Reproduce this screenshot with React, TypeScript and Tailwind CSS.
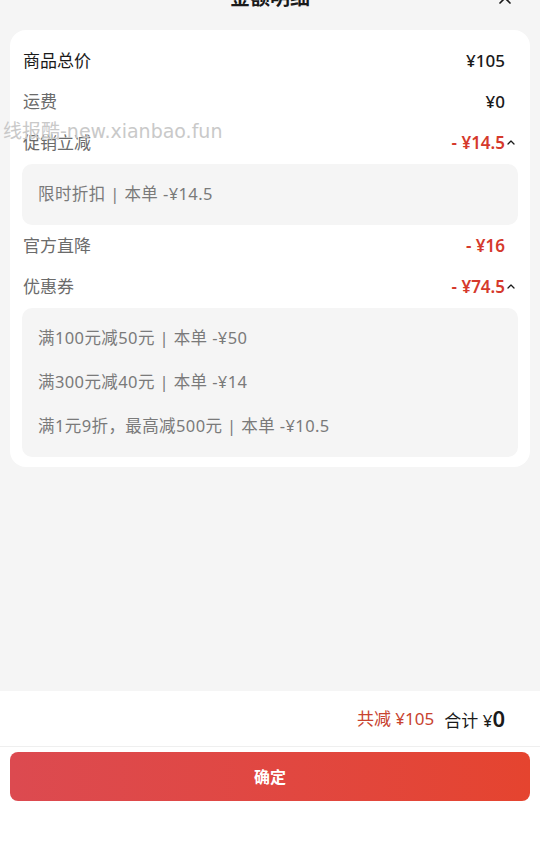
import { X, ChevronUp } from 'lucide-react'

const font = { fontFamily: '"Noto Sans", "Noto Sans CJK SC", sans-serif' }

interface RowProps {
  label: string
  value: string
  strong?: boolean
  red?: boolean
  open?: boolean
}

function Row({ label, value, strong, red, open }: RowProps) {
  return (
    <div className="flex h-[41px] items-center justify-between pl-[13px] pr-[13px]">
      <span className={strong ? 'text-[17px] text-[#1a1a1a]' : 'text-[17px] text-[#6b6b6b]'}>{label}</span>
      <div className="flex items-center">
        <span
          className={
            red
              ? 'text-[17px] font-semibold text-[#d5392c]'
              : 'text-[17px] font-medium text-[#1a1a1a]'
          }
        >
          {value}
        </span>
        <span className="flex w-[12px] justify-end">
          {open && <ChevronUp size={13} strokeWidth={2.5} className="text-[#1a1a1a]" />}
        </span>
      </div>
    </div>
  )
}

function DetailBox({ lines }: { lines: string[] }) {
  return (
    <div className="mx-[12px] rounded-[10px] bg-[#f5f5f5] px-[16px] py-[8.5px]">
      {lines.map((line) => (
        <div key={line} className="flex h-[44px] items-center text-[16.5px] tracking-[0.4px] text-[#7a7a7a]">
          {line}
        </div>
      ))}
    </div>
  )
}

export default function App() {
  return (
    <div className="relative flex h-[844px] w-full flex-col overflow-hidden bg-[#f5f5f5]" style={font}>
      <div className="relative -mt-[22px] mb-[12px] flex h-[40px] shrink-0 items-center justify-center">
        <span className="text-[20px] font-bold text-[#1a1a1a]">金额明细</span>
        <X size={20} strokeWidth={2} className="absolute right-[25px] text-[#1a1a1a]" />
      </div>

      <div className="mx-[10px] rounded-[16px] bg-white pb-[10px] pt-[10px]">
        <Row label="商品总价" value="¥105" strong />
        <Row label="运费" value="¥0" />
        <Row label="促销立减" value="- ¥14.5" red open />
        <div className="mt-[1px]">
          <div className="mx-[12px] flex h-[61px] items-center rounded-[10px] bg-[#f5f5f5] px-[16px] text-[16.5px] tracking-[0.4px] text-[#7a7a7a]">
            限时折扣 | 本单 -¥14.5
          </div>
        </div>
        <Row label="官方直降" value="- ¥16" red />
        <Row label="优惠券" value="- ¥74.5" red open />
        <div className="mt-[1px]">
          <DetailBox
            lines={['满100元减50元 | 本单 -¥50', '满300元减40元 | 本单 -¥14', '满1元9折，最高减500元 | 本单 -¥10.5']}
          />
        </div>
      </div>

      <div className="flex-1" />

      <div className="h-[153px] shrink-0 bg-white">
        <div className="flex h-[55px] items-center justify-end gap-[10px] pr-[35px]">
          <span className="text-[17px] text-[#c8432f]">共减 ¥105</span>
          <span className="flex items-baseline text-[17px] text-[#1a1a1a]">
            合计 ¥<span className="text-[22px] font-semibold">0</span>
          </span>
        </div>
        <div className="h-px bg-[#efefef]" />
        <div className="px-[10px] pt-[5px]">
          <button className="flex h-[49px] w-full items-center justify-center rounded-[8px] bg-gradient-to-r from-[#dc4a50] to-[#e5442f] text-[16px] font-semibold text-white">
            确定
          </button>
        </div>
      </div>

      <div
        className="pointer-events-none absolute left-[3px] top-[117px] text-[19px] text-[#c9c9c9]"
        style={{ fontFamily: '"DejaVu Sans", "Noto Sans CJK SC", sans-serif' }}
      >
        线报酷-new.xianbao.fun
      </div>
    </div>
  )
}
